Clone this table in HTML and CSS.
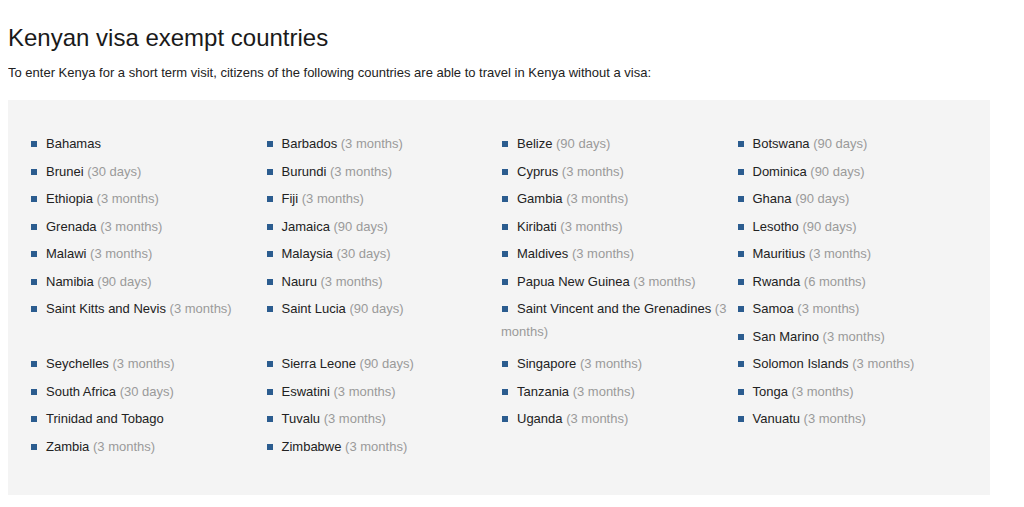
FILE: index.html
```html
<!DOCTYPE html>
<html lang="en">
  <head>
    <meta charset="UTF-8">
    <meta name="viewport" content="width=device-width, initial-scale=1.0">
    <title>Kenyan visa exempt countries</title>
    <link rel="stylesheet" href="styles.css">
  </head>
  <body>
    <h1>Kenyan visa exempt countries</h1>
    <p class="intro">To enter Kenya for a short term visit, citizens of the following countries are able to travel in Kenya without a visa:</p>
    <div class="countries">
      <ul class="country-list">
        <li><span class="bullet"></span>Bahamas</li>
        <li><span class="bullet"></span>Barbados <span class="stay">(3 months)</span></li>
        <li><span class="bullet"></span>Belize <span class="stay">(90 days)</span></li>
        <li><span class="bullet"></span>Botswana <span class="stay">(90 days)</span></li>
        <li><span class="bullet"></span>Brunei <span class="stay">(30 days)</span></li>
        <li><span class="bullet"></span>Burundi <span class="stay">(3 months)</span></li>
        <li><span class="bullet"></span>Cyprus <span class="stay">(3 months)</span></li>
        <li><span class="bullet"></span>Dominica <span class="stay">(90 days)</span></li>
        <li><span class="bullet"></span>Ethiopia <span class="stay">(3 months)</span></li>
        <li><span class="bullet"></span>Fiji <span class="stay">(3 months)</span></li>
        <li><span class="bullet"></span>Gambia <span class="stay">(3 months)</span></li>
        <li><span class="bullet"></span>Ghana <span class="stay">(90 days)</span></li>
        <li><span class="bullet"></span>Grenada <span class="stay">(3 months)</span></li>
        <li><span class="bullet"></span>Jamaica <span class="stay">(90 days)</span></li>
        <li><span class="bullet"></span>Kiribati <span class="stay">(3 months)</span></li>
        <li><span class="bullet"></span>Lesotho <span class="stay">(90 days)</span></li>
        <li><span class="bullet"></span>Malawi <span class="stay">(3 months)</span></li>
        <li><span class="bullet"></span>Malaysia <span class="stay">(30 days)</span></li>
        <li><span class="bullet"></span>Maldives <span class="stay">(3 months)</span></li>
        <li><span class="bullet"></span>Mauritius <span class="stay">(3 months)</span></li>
        <li><span class="bullet"></span>Namibia <span class="stay">(90 days)</span></li>
        <li><span class="bullet"></span>Nauru <span class="stay">(3 months)</span></li>
        <li><span class="bullet"></span>Papua New Guinea <span class="stay">(3 months)</span></li>
        <li><span class="bullet"></span>Rwanda <span class="stay">(6 months)</span></li>
        <li><span class="bullet"></span>Saint Kitts and Nevis <span class="stay">(3 months)</span></li>
        <li><span class="bullet"></span>Saint Lucia <span class="stay">(90 days)</span></li>
        <li><span class="bullet"></span>Saint Vincent and the Grenadines <span class="stay">(3 months)</span></li>
        <li><span class="bullet"></span>Samoa <span class="stay">(3 months)</span></li>
        <li><span class="bullet"></span>San Marino <span class="stay">(3 months)</span></li>
        <li><span class="bullet"></span>Seychelles <span class="stay">(3 months)</span></li>
        <li><span class="bullet"></span>Sierra Leone <span class="stay">(90 days)</span></li>
        <li><span class="bullet"></span>Singapore <span class="stay">(3 months)</span></li>
        <li><span class="bullet"></span>Solomon Islands <span class="stay">(3 months)</span></li>
        <li><span class="bullet"></span>South Africa <span class="stay">(30 days)</span></li>
        <li><span class="bullet"></span>Eswatini <span class="stay">(3 months)</span></li>
        <li><span class="bullet"></span>Tanzania <span class="stay">(3 months)</span></li>
        <li><span class="bullet"></span>Tonga <span class="stay">(3 months)</span></li>
        <li><span class="bullet"></span>Trinidad and Tobago</li>
        <li><span class="bullet"></span>Tuvalu <span class="stay">(3 months)</span></li>
        <li><span class="bullet"></span>Uganda <span class="stay">(3 months)</span></li>
        <li><span class="bullet"></span>Vanuatu <span class="stay">(3 months)</span></li>
        <li><span class="bullet"></span>Zambia <span class="stay">(3 months)</span></li>
        <li><span class="bullet"></span>Zimbabwe <span class="stay">(3 months)</span></li>
      </ul>
    </div>
  </body>
</html>
```

FILE: styles.css
```css
body {
  margin: 8px;
  font-family: "Liberation Sans", Arial, sans-serif;
  color: #222;
  background-color: #fff;
}

h1 {
  font-size: 24px;
  font-weight: normal;
  margin: 16px 0 13px;
  color: #1a1a1a;
}

.intro {
  font-size: 13px;
  margin: 0 0 20px;
  color: #222;
}

.countries {
  width: 942px;
  background-color: #f4f4f4;
  padding: 32px 18px 33px 22px;
}

.country-list {
  list-style: none;
  margin: 0;
  padding: 0;
  font-size: 13px;
  line-height: 23px;
}

/* clear the floats */
.country-list::after {
  content: "";
  display: block;
  clear: both;
}

.country-list li {
  float: left;
  width: 25%;
  box-sizing: border-box;
  padding-right: 8px;
  padding-bottom: 4.5px;
}

.bullet {
  display: inline-block;
  width: 6px;
  height: 6px;
  margin: 0 9px 1px 1px;
  background-color: #2b5c8f;
  vertical-align: middle;
}

.stay {
  color: #9a9a9a;
}
```
